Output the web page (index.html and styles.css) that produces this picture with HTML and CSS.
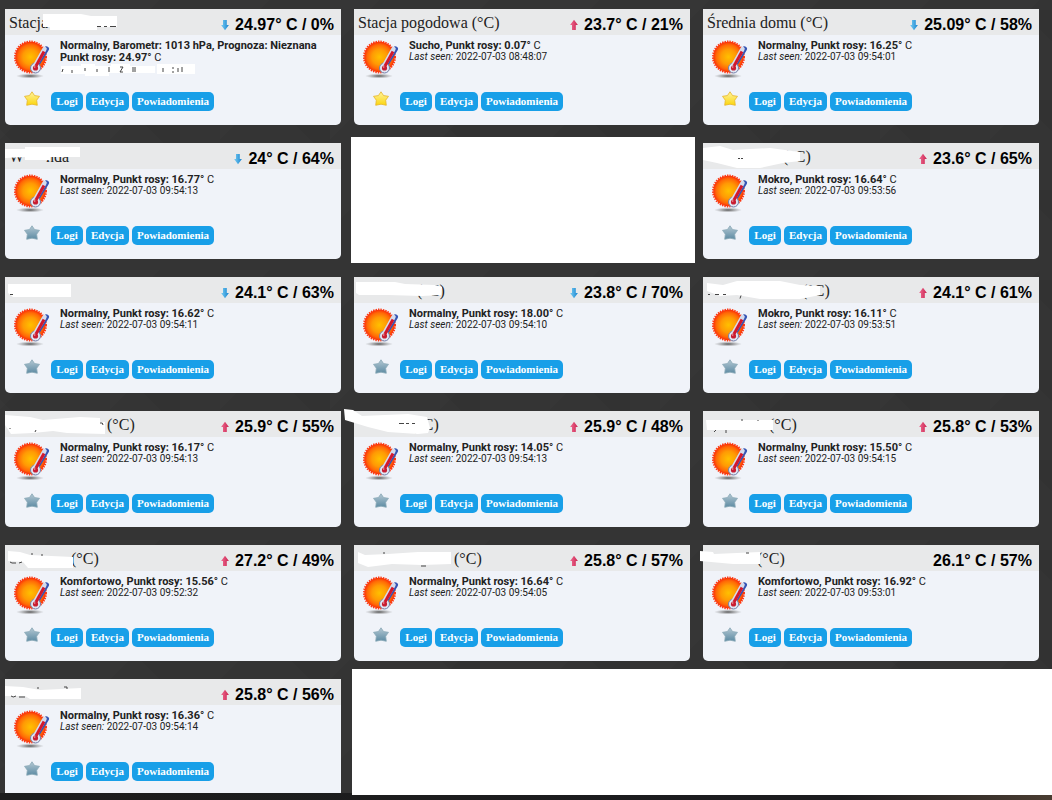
FILE: index.html
```
<!DOCTYPE html>
<html lang="pl">
	<head>
		<meta charset="utf-8">
		<title>Temperatura</title>
		<link rel="stylesheet" href="styles.css">
	</head>
	<body>
		<svg class="defs" aria-hidden="true">
			<defs>
				<radialGradient id="sunFill">
					<stop offset="0" stop-color="#ffc000"/>
					<stop offset=".5" stop-color="#ff9a04"/>
					<stop offset=".8" stop-color="#ff6a06"/>
					<stop offset="1" stop-color="#fb3008"/>
				</radialGradient>
				<radialGradient id="shadowFill">
					<stop offset="0" stop-color="#555"/>
					<stop offset="1" stop-color="#888" stop-opacity="0"/>
				</radialGradient>
				<linearGradient id="goldFill" x2="0" y2="1">
					<stop offset="0" stop-color="#fff3a0"/>
					<stop offset="1" stop-color="#fbd50c"/>
				</linearGradient>
				<linearGradient id="greyFill" x2="0" y2="1">
					<stop offset="0" stop-color="#b4c8d3"/>
					<stop offset="1" stop-color="#5d8ba3"/>
				</linearGradient>
				<linearGradient id="downFill">
					<stop offset="0" stop-color="#79cdf2"/>
					<stop offset="1" stop-color="#1683d0"/>
				</linearGradient>
				<linearGradient id="upFill">
					<stop offset="0" stop-color="#ee6c91"/>
					<stop offset="1" stop-color="#cb2350"/>
				</linearGradient>
			</defs>
			<symbol id="temp" viewBox="0 0 36 40">
				<ellipse cx="16" cy="36" rx="14" ry="2.5" fill="url(#shadowFill)"/>
				<circle cx="16.500" cy="17" r="15.500" fill="none" stroke="#fb3a18" stroke-width="2" stroke-dasharray="1.400 1.050"/>
				<circle cx="16.500" cy="17" r="15.200" fill="url(#sunFill)"/>
				<path d="M32.500 9 24 23" stroke="#3555b4" stroke-width="5" stroke-linecap="round"/>
				<circle cx="21.500" cy="28" r="5" fill="#e0e6f2" stroke="#7281ad"/>
				<path d="M30.500 9 21.500 25" stroke="#d5dbec" stroke-width="4.500" stroke-linecap="round"/>
				<path d="M30 11.500 22 26" stroke="#d3182c" stroke-width="3"/>
				<circle cx="21.500" cy="28" r="2.600" fill="#c81d32"/>
				<circle cx="20.700" cy="27" r=".8" fill="#f5a6a8"/>
			</symbol>
			<symbol id="star" viewBox="0 0 16 16">
				<path d="M8 .8 10.600 4.600 15.500 5.300 12.700 9.200 13.300 14.300 8 13.200 2.700 14.300 3.300 9.200.5 5.300 5.400 4.600Z" stroke-width=".8" stroke-linejoin="round"/>
			</symbol>
			<symbol id="down" viewBox="0 0 8 12">
				<path d="M2 1H5.800V6H7.900L4 11.200.1 6H2Z" fill="url(#downFill)"/>
			</symbol>
			<symbol id="up" viewBox="0 0 8 12">
				<path d="M2 11H5.800V6H7.900L4 .8.1 6H2Z" fill="url(#upFill)"/>
			</symbol>
		</svg>
		<main class="devices" id="devices"></main>
		<footer class="footer"></footer>
		<script src="script.js"></script>
	</body>
</html>
```

FILE: styles.css
```
* {
	box-sizing: border-box;
	margin: 0;
	padding: 0;
}
body {
	min-height: 100vh;
	display: flex;
	flex-direction: column;
	overflow-x: hidden;
	background:
		linear-gradient(135deg, rgba(255,255,255,.012) 25%, transparent 25%) 0 0 / 110px 90px,
		linear-gradient(225deg, rgba(0,0,0,.04) 25%, transparent 25%) 30px 10px / 150px 90px,
		#343434;
	color: #222;
	font-family: Roboto, "Liberation Sans", sans-serif;
}
.defs {
	position: absolute;
	width: 0;
	height: 0;
}
.devices {
	display: grid;
	grid-template-columns: repeat(3, 1fr);
	gap: 18px 13px;
	padding: 9px 13px 0 5px;
}
.card {
	position: relative;
	min-height: 116px;
	background: #f0f3f9;
	border-radius: 0 0 5px 5px;
}
.card:nth-last-child(2) {
	min-height: 114px;
	border-radius: 0;
}
.head {
	display: flex;
	justify-content: space-between;
	height: 26px;
	padding: 0 7px 0 4px;
	background: #e8e9ea;
}
.name {
	font: 16px/27px "Liberation Serif", serif;
	white-space: nowrap;
}
.gap {
	display: inline-block;
}
.value {
	display: flex;
	align-items: center;
	gap: 6px;
	padding-top: 5px;
	color: #000;
	font: bold 16px/22px "Liberation Sans", Arial, sans-serif;
}
.arrow {
	width: 8px;
	height: 12px;
}
.info {
	display: grid;
	grid-template-columns: 36px 1fr;
	gap: 10px;
	height: 56px;
	padding: 5px 8px 0 9px;
}
.temp {
	width: 36px;
	height: 40px;
}
.status {
	font-size: 11px;
	font-weight: bold;
	line-height: 12px;
}
.unit {
	font-weight: normal;
}
.seen {
	font-size: 10px;
	line-height: 10px;
}
.actions {
	display: flex;
	gap: 3px;
	padding-left: 19px;
}
.fav {
	width: 16px;
	height: 16px;
	margin-right: 8px;
	border: 0;
	background: none;
}
.fav svg {
	display: block;
	width: 16px;
	height: 16px;
	fill: url(#greyFill);
	stroke: #8ba9b8;
}
.fav.on svg {
	fill: url(#goldFill);
	stroke: #e6b52c;
}
.btn {
	min-width: 32px;
	height: 19px;
	margin-top: 1px;
	padding: 0 5px;
	border: 0;
	border-radius: 5px;
	background: #189fe8;
	color: #fff;
	font: bold 11px/19px "Liberation Serif", serif;
}
.cover {
	position: absolute;
	top: 0;
	left: 0;
	width: 336px;
	height: 116px;
	overflow: visible;
	pointer-events: none;
}
.cover .paint {
	fill: #fff;
}
.cover .marks {
	fill: none;
	stroke: #444;
}
.blank {
	margin: -6px -5px -4px -3px;
	background: #fff;
}
.blank.wide {
	position: relative;
	grid-column: span 2;
	margin: -10px -13px -2px -2px;
}
.footer {
	flex: 1;
	min-height: 7px;
	background: linear-gradient(90deg, #1d1d1d, #1c1c1f 80%, #4a3d32);
}
```

FILE: script.js
```
// gap: width of the painted-over part of the name, paint/marks: shapes over the card
var devices = [
	{name: 'Stacja', dir: 'down', value: '24.97° C / 0%', first: 'Normalny, Barometr: 1013 hPa, Prognoza: Nieznana', status: 'Punkt rosy: 24.97°', fav: true,
		paint: 'M38 5H76L86 7H112V18H92V21H45V18H38ZM56 57H76V55H90V57H106V55H125V57H150V64H104V67H80V65H56ZM152 55H190V65H152Z',
		marks: 'M92 17.500h4m3 0h3m3 0h6M57 63l1-3m9 1v3m13-5v3m12-2v3m12-5v5m11-5h3l-3 5h3m10-5v5m2-5v5m28-4v4m9-4h2m-2 4h2m4-4v4m4-5v5'},
	{name: 'Stacja pogodowa (°C)', dir: 'up', value: '23.7° C / 21%', status: 'Sucho, Punkt rosy: 0.07°', seen: '08:48:07', fav: true},
	{name: 'Średnia domu (°C)', dir: 'down', value: '25.09° C / 58%', status: 'Normalny, Punkt rosy: 16.25°', seen: '09:54:01', fav: true},
	{before: 'W', gap: 22, name: 'nda', dir: 'down', value: '24° C / 64%', status: 'Normalny, Punkt rosy: 16.77°', seen: '09:54:13',
		paint: 'M0 6H20V4H75V14H45V17H20V14L0 15Z'},
	{blank: 'blank'},
	{gap: 76, name: '(°C)', dir: 'up', value: '23.6° C / 65%', status: 'Mokro, Punkt rosy: 16.64°', seen: '09:53:56',
		paint: 'M0 5 17 3 30 7 67 5 97 9V18L80 20 57 25H34L14 20 0 17Z', marks: 'M35 15.500h2m1 0h2'},
	{dir: 'down', value: '24.1° C / 63%', status: 'Normalny, Punkt rosy: 16.62°', seen: '09:54:11',
		paint: 'M3 7H66V20H8L3 16Z', marks: 'M5 17.500h3'},
	{gap: 59, name: '(°C)', dir: 'down', value: '23.8° C / 70%', status: 'Normalny, Punkt rosy: 18.00°', seen: '09:54:10',
		paint: 'M2 5H41L51 7 81 8 88 10 87 18 68 19 34 18H5L2 16Z'},
	{gap: 95, name: '(°C)', dir: 'up', value: '24.1° C / 61%', status: 'Mokro, Punkt rosy: 16.11°', seen: '09:53:51',
		paint: 'M4 6 20 8 34 4H77L97 8 117 9V18L97 22H57L34 18 17 19 4 14Z', marks: 'M5 17.500h2m5 0h4m4 0h3m15 1-1 3'},
	{gap: 98, name: '(°C)', dir: 'up', value: '25.9° C / 55%', status: 'Normalny, Punkt rosy: 16.17°', seen: '09:54:13',
		paint: 'M0 4 25 6 38 9 75 6 95 7V11H100V23L62 22 48 20 28 22 6 23 0 14Z', marks: 'M5 17v1m25 3 1-2m64-7q3-1 3 2'},
	{gap: 53, name: '(°C)', dir: 'up', value: '25.9° C / 48%', status: 'Normalny, Punkt rosy: 14.05°', seen: '09:54:13',
		paint: 'M-10-2-1-1 8 5 54 3 73 6 76 17 74 22 64 23 34 21 14 16-9 9Z', marks: 'M45 12.500h5m2 0h3m3 0h3'},
	{gap: 62, name: '(°C)', dir: 'up', value: '25.8° C / 53%', status: 'Normalny, Punkt rosy: 15.50°', seen: '09:54:15',
		paint: 'M3 9H70V19H4Z', marks: 'M11 21l2-2m10 0v3m16-14v2m16-1v1'},
	{gap: 62, name: '(°C)', dir: 'up', value: '27.2° C / 49%', status: 'Komfortowo, Punkt rosy: 15.56°', seen: '09:52:32',
		paint: 'M3 6 15 7 25 10 68 12V23H23L18 17 3 16Z', marks: 'M5 17l2 1h4m3 0 3-1M27 8v2m10-1v2'},
	{gap: 96, name: '(°C)', dir: 'up', value: '25.8° C / 57%', status: 'Normalny, Punkt rosy: 16.64°', seen: '09:54:05',
		paint: 'M4 7 11 10 34 9 64 7H97V19L68 20 38 19 14 22 4 18Z', marks: 'M30 7v2m37 12h5'},
	{gap: 50, name: '(°C)', value: '26.1° C / 57%', status: 'Komfortowo, Punkt rosy: 16.92°', seen: '09:53:01',
		paint: 'M-3 6 10 7 11 9 57 7V19H30L-3 16Z', marks: 'M43 8h3'},
	{dir: 'up', value: '25.8° C / 56%', status: 'Normalny, Punkt rosy: 16.36°', seen: '09:54:14',
		paint: 'M0 7 18 8 35 11 76 9V20H25L20 17H0Z', marks: 'M6 17q2 2 5 0m3 1h6M33 8v2m26-2h3v2'},
	{blank: 'blank wide'}
];

function icon(id, cls){
	return '<svg class="' + cls + '" aria-hidden="true"><use href="#' + id + '"/></svg>';
}

function card(d){
	if(d.blank){
		return '<div class="' + d.blank + '"></div>';
	}
	var html = '<section class="card"><div class="head"><h2 class="name">' + (d.before || '');
	if(d.gap){
		html += '<span class="gap" style="width:' + d.gap + 'px"></span>';
	}
	html += (d.name || '') + '</h2><div class="value">' + (d.dir ? icon(d.dir, 'arrow') : '') + '<span>' + d.value + '</span></div></div>';
	html += '<div class="info">' + icon('temp', 'temp') + '<div>';
	if(d.first){
		html += '<p class="status">' + d.first + '</p>';
	}
	html += '<p class="status">' + d.status + ' <span class="unit">C</span></p>';
	if(d.seen){
		html += '<p class="seen"><i>Last seen:</i> 2022-07-03 ' + d.seen + '</p>';
	}
	html += '</div></div><div class="actions">';
	html += '<button class="fav' + (d.fav ? ' on' : '') + '" aria-label="Ulubione">' + icon('star', '') + '</button>';
	html += '<button class="btn">Logi</button><button class="btn">Edycja</button><button class="btn">Powiadomienia</button></div>';
	if(d.paint){
		html += '<svg class="cover" aria-hidden="true"><path class="paint" d="' + d.paint + '"/><path class="marks" d="' + (d.marks || '') + '"/></svg>';
	}
	return html + '</section>';
}

document.getElementById('devices').innerHTML = devices.map(card).join('');
```
